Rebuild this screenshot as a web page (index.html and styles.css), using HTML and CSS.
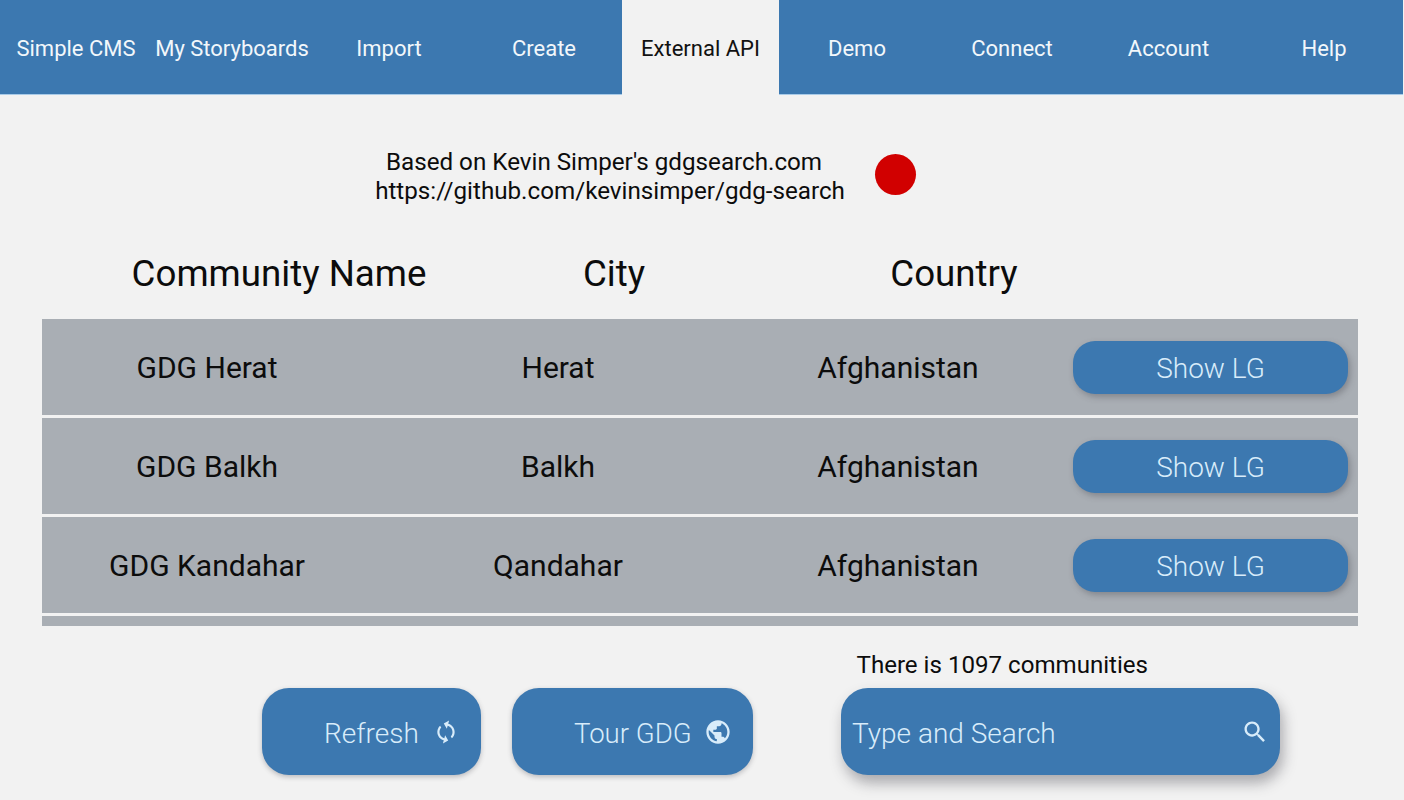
FILE: index.html
```html
<!DOCTYPE html>
<html lang="en">
<head>
<meta charset="utf-8">
<title>External API</title>
<link rel="stylesheet" href="styles.css">
</head>
<body>
<nav class="nav">
  <a class="tab">Simple CMS</a>
  <a class="tab">My Storyboards</a>
  <a class="tab">Import</a>
  <a class="tab">Create</a>
  <a class="tab active">External API</a>
  <a class="tab">Demo</a>
  <a class="tab">Connect</a>
  <a class="tab">Account</a>
  <a class="tab help">Help</a>
</nav>
<main class="main">
  <section class="info">
    <div class="credit">
      <p class="credit-first">Based on Kevin Simper's gdgsearch.com</p>
      <p>https://github.com/kevinsimper/gdg-search</p>
    </div>
    <span class="dot"></span>
  </section>
  <header class="heads">
    <div>Community Name</div>
    <div>City</div>
    <div>Country</div>
  </header>
  <div class="list">
    <div class="row">
      <div>GDG Herat</div><div>Herat</div><div>Afghanistan</div>
      <button class="show"><span>Show LG</span></button>
    </div>
    <div class="row">
      <div>GDG Balkh</div><div>Balkh</div><div>Afghanistan</div>
      <button class="show"><span>Show LG</span></button>
    </div>
    <div class="row">
      <div>GDG Kandahar</div><div>Qandahar</div><div>Afghanistan</div>
      <button class="show"><span>Show LG</span></button>
    </div>
    <div class="row"></div>
  </div>
  <section class="actions">
    <button class="action refresh">
      <span class="label">Refresh</span>
      <svg class="icon sync" viewBox="0 0 24 24"><path d="M12 4V1L8 5l4 4V6c3.31 0 6 2.69 6 6 0 1.01-.25 1.97-.7 2.8l1.46 1.46C19.54 15.03 20 13.57 20 12c0-4.42-3.58-8-8-8zm0 14c-3.31 0-6-2.69-6-6 0-1.01.25-1.97.7-2.8L5.24 7.74C4.46 8.97 4 10.43 4 12c0 4.42 3.58 8 8 8v3l4-4-4-4v3z"/></svg>
    </button>
    <button class="action tour">
      <span class="label">Tour GDG</span>
      <svg class="icon" viewBox="0 0 24 24"><path d="M12 2C6.48 2 2 6.48 2 12s4.48 10 10 10 10-4.48 10-10S17.52 2 12 2zm-1 17.93c-3.95-.49-7-3.85-7-7.93 0-.62.08-1.21.21-1.79L9 15v1c0 1.1.9 2 2 2v1.93zm6.9-2.54c-.26-.81-1-1.39-1.9-1.39h-1v-3c0-.55-.45-1-1-1H8v-2h2c.55 0 1-.45 1-1V7h2c1.1 0 2-.9 2-2v-.41c2.93 1.19 5 4.06 5 7.41 0 2.08-.8 3.97-2.1 5.39z"/></svg>
    </button>
    <div class="search-group">
      <div class="count">There is 1097 communities</div>
      <div class="search">
        <span class="label">Type and Search</span>
        <svg class="icon" viewBox="0 0 24 24"><path d="M15.5 14h-.79l-.28-.27C15.41 12.59 16 11.11 16 9.5 16 5.91 13.09 3 9.5 3S3 5.91 3 9.5 5.91 16 9.5 16c1.61 0 3.09-.59 4.23-1.57l.27.28v.79l5 4.99L20.49 19l-4.99-5zm-6 0C7.01 14 5 11.99 5 9.5S7.01 5 9.5 5 14 7.01 14 9.5 11.99 14 9.5 14z"/></svg>
      </div>
    </div>
  </section>
</main>
</body>
</html>
```
FILE: styles.css
```css
* { box-sizing: border-box; }
html, body { margin: 0; height: 800px; overflow: hidden; }
body {
  background: #f2f2f2;
  color: #0c0c0c;
  font-family: Roboto, "Liberation Sans", sans-serif;
}
.nav {
  display: grid;
  grid-template-columns: 152px 160px 154px 156px 157px 156px 154px 159px 155px;
  height: 95px;
  width: 1403px;
}
.tab {
  display: flex;
  align-items: center;
  justify-content: center;
  padding-top: 2px;
  background: #3c78b0;
  border-bottom: 1px solid #a9cbe8;
  color: #f2f7fb;
  font-size: 22px;
  white-space: nowrap;
}
.tab.help { padding-right: 3px; }
.tab.active {
  padding-top: 1px;
  background: #f2f2f2;
  border-bottom: 0;
  color: #111;
}
.info {
  display: flex;
  align-items: flex-start;
  height: 58px;
  margin-top: 53px;
  padding-left: 375px;
}
.credit {
  width: 470px;
  font-size: 24.2px;
  line-height: 29px;
  text-align: center;
  white-space: nowrap;
}
.credit p { margin: 0; }
.credit .credit-first { padding-right: 12px; }
.dot {
  width: 41px;
  height: 41px;
  margin: 6px 0 0 30px;
  border-radius: 50%;
  background: #d10000;
}
.heads {
  display: grid;
  grid-template-columns: 474px 196px 484px;
  margin: 43px 0 0 42px;
  font-size: 36.7px;
  line-height: 50px;
  text-align: center;
}
.list {
  width: 1316px;
  height: 307px;
  margin: 20px 0 0 42px;
  overflow: hidden;
}
.row {
  display: grid;
  grid-template-columns: 330px 372px 308px 1fr;
  align-items: center;
  height: 96px;
  margin-bottom: 3px;
  background: #a9aeb4;
  font-size: 30px;
  text-align: center;
}
.show {
  justify-self: end;
  width: 275px;
  height: 53px;
  margin: 0 10px 0 0;
  padding: 3px 0 0;
  border: 0;
  border-radius: 22px;
  background: #3c78b0;
  box-shadow: 2px 3px 6px rgba(60, 60, 70, .35);
  color: #d8ecfa;
  font: 300 28px Roboto, "Liberation Sans", sans-serif;
}
.actions {
  display: flex;
  align-items: flex-end;
  margin-top: 25px;
  padding-left: 262px;
}
.action, .search {
  display: flex;
  align-items: center;
  height: 87px;
  border: 0;
  border-radius: 27px;
  background: #3c78b0;
  color: #d8ecfa;
  font: 300 28px Roboto, "Liberation Sans", sans-serif;
}
.label { padding-top: 4px; }
.action {
  padding: 0;
  box-shadow: 0 2px 5px rgba(60, 60, 70, .3);
}
.refresh { width: 219px; padding-left: 62px; gap: 14px; }
.tour { width: 241px; margin-left: 31px; padding-left: 62px; gap: 12px; font-size: 27.6px; }
.icon {
  flex: none;
  width: 28px;
  height: 28px;
  fill: #d8ecfa;
}
.sync { width: 26px; height: 26px; transform: rotate(15deg); }
.search-group { margin-left: 88px; }
.count {
  padding-left: 15.5px;
  font-size: 24.1px;
  line-height: 28px;
  margin-bottom: 9px;
}
.search {
  justify-content: space-between;
  width: 439px;
  padding: 0 11px;
  box-shadow: 3px 8px 14px rgba(60, 60, 70, .4);
}
```
